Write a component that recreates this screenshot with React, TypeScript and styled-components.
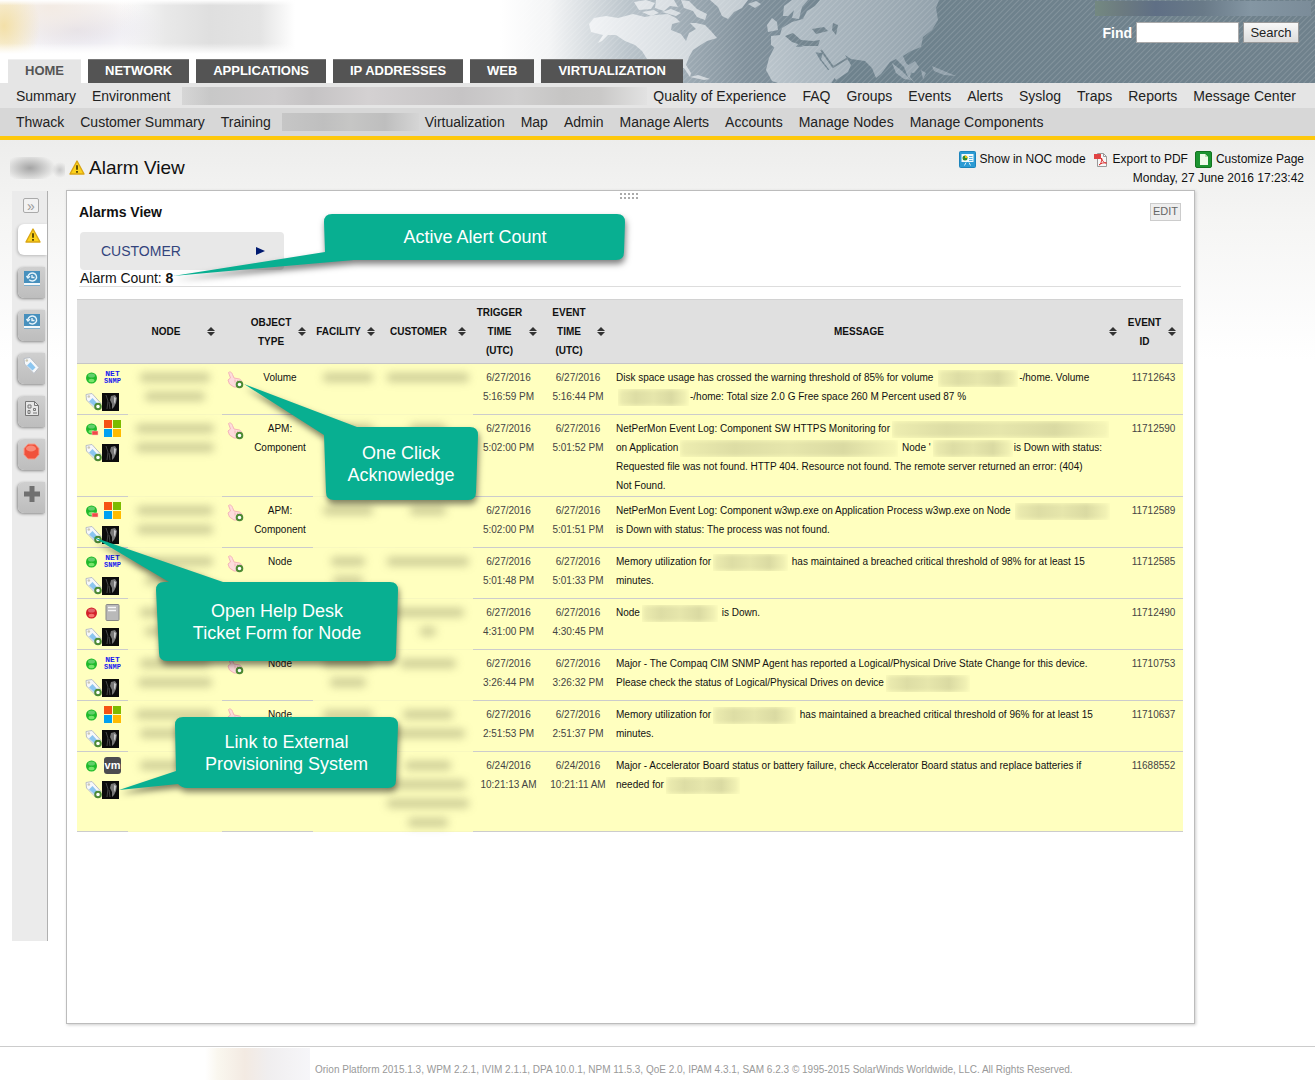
import React from "react";
import styled, { createGlobalStyle } from "styled-components";

const Global = createGlobalStyle`
  * { box-sizing: border-box; }
  body { margin: 0; background: #fff; color: #111; font-family: "Liberation Sans", Arial, sans-serif; font-size: 14px; }
  a { color: inherit; text-decoration: none; }
  svg { display: block; flex: none; }
`;

/* ---------- header ---------- */
const Header = styled.header`
  position: relative;
  display: flex;
  justify-content: space-between;
  height: 83px;
  overflow: hidden;
`;
const Backdrop = styled.div`
  position: absolute;
  top: 0;
  right: 0;
  z-index: -1;
`;
const Brand = styled.div`
  display: flex;
  flex-direction: column;
  justify-content: space-between;
  padding-left: 8px;
`;
const LogoBlur = styled.div`
  width: 300px;
  height: 54px;
  margin-left: -8px;
  background:
    linear-gradient(#fff, transparent 10%, transparent 80%, #fff),
    radial-gradient(ellipse 36px 50px at 4px 26px, #f3e0a8, transparent),
    radial-gradient(ellipse 90px 40px at 50px 8px, #f3ebe4, transparent),
    radial-gradient(ellipse 90px 34px at 76px 30px, #e2dfe9, transparent),
    linear-gradient(90deg, transparent 120px, #e9e9e9 165px, #dfdfdf 210px, #e4e4e4 260px, transparent 295px);
`;
const Tabs = styled.nav`
  display: flex;
  gap: 7px;
`;
const Tab = styled.a<{ $on?: boolean }>`
  padding: 0 17px;
  height: 24px;
  line-height: 22px;
  font-size: 13px;
  font-weight: bold;
  border-top: 1px solid ${(p) => (p.$on ? "#efefef" : "#777")};
  background: ${(p) => (p.$on ? "#e5e5e5" : "#545454")};
  color: ${(p) => (p.$on ? "#555" : "#fff")};
`;
const Tools = styled.form`
  display: flex;
  flex-direction: column;
  align-items: flex-end;
  gap: 6px;
  padding-top: 1px;
`;
const UserBlur = styled.div`
  width: 216px;
  height: 15px;
  margin-right: 4px;
  background: linear-gradient(90deg, #748981, #6c7b80 12%, #5f6f85 28%, #697a88 50%, #8496a3 72%, #7b8c99);
`;
const Find = styled.div`
  display: flex;
  align-items: center;
  gap: 4px;
  padding-right: 16px;
  label { color: #fff; font-weight: bold; }
  input { width: 103px; height: 21px; border: 1px solid #aaa; background: #fff; }
  button {
    width: 56px; height: 21px; padding: 0; border: 1px solid #999;
    background: linear-gradient(#f8f8f8, #dcdcdc); color: #222; font: 13px "Liberation Sans", Arial, sans-serif;
  }
`;
const SubNav = styled.nav<{ $dark?: boolean }>`
  display: flex;
  align-items: center;
  gap: 16px;
  height: ${(p) => (p.$dark ? 28 : 25)}px;
  padding: 0 19px 0 16px;
  white-space: nowrap;
  color: #222;
  background: ${(p) => (p.$dark ? "#d7d7d7" : "#e5e5e5")};
`;
const NavBlur = styled.span<{ $width?: number }>`
  flex: ${(p) => (p.$width ? `0 0 ${p.$width}px` : "1 1 0")};
  height: 18px;
  margin: 0 -10px 0 -5px;
  background: ${(p) =>
    p.$width
      ? "linear-gradient(90deg, #c6c6c6, #bfbfbf 30%, #c6c6c5 50%, #bebebe 75%, #d5d5d5)"
      : "linear-gradient(90deg, #d6d6d6, #c8c8c8 6%, #cfcdce 20%, #c5c3c4 28%, #d4d1d2 40%, #c6c4c5 60%, #d0cfcf 72%, #c6c5c4 82%, #cac9c8 90%, #e2e2e2)"};
`;

/* ---------- page ---------- */
const Content = styled.main`
  border-top: 4px solid #fec80c;
  background: linear-gradient(#ededec, #f5f5f4 80px, #fff 220px);
`;
const TitleRow = styled.div`
  display: flex;
  justify-content: space-between;
  height: 50px;
  padding: 0 11px 0 10px;
`;
const Title = styled.div`
  display: flex;
  align-items: center;
  gap: 4px;
  padding-top: 5px;
`;
const TitleBlur = styled.span`
  width: 55px;
  height: 22px;
  background:
    radial-gradient(ellipse 26px 14px at 20px 11px, #a4a4a4, transparent),
    radial-gradient(ellipse 8px 8px at 50px 13px, #c8c8c8, transparent);
`;
const Heading = styled.h1`
  margin: 0;
  font-size: 19px;
  line-height: 24px;
  font-weight: normal;
`;
const Actions = styled.div`
  padding-top: 10px;
  font-size: 12px;
  line-height: 19px;
  text-align: right;
`;
const ActionLinks = styled.div`
  display: flex;
  justify-content: flex-end;
  gap: 7px;
`;
const Action = styled.a`
  display: flex;
  align-items: center;
  gap: 4px;
`;
const Body = styled.div`
  display: flex;
  align-items: flex-start;
  gap: 18px;
  padding: 0 120px 22px 12px;
`;
const Rail = styled.aside`
  display: flex;
  flex-direction: column;
  gap: 12px;
  flex: 0 0 35px;
  min-height: 750px;
  margin-top: 1px;
  padding: 7px 0 0 6px;
  background: #ebebeb;
  border-right: 1px solid #b0b0b0;
`;
const Expand = styled.button`
  width: 16px;
  height: 15px;
  margin: 0 0 -1px 5px;
  padding: 0;
  border: 1px solid #aaa;
  border-radius: 2px;
  background: #f2f2f2;
  color: #999;
  font: 14px/10px "Liberation Sans", Arial, sans-serif;
`;
const RailTab = styled.button<{ $on?: boolean }>`
  display: flex;
  justify-content: center;
  width: ${(p) => (p.$on ? 29 : 27)}px;
  height: 31px;
  padding: 4px 0 0;
  border: 0;
  border-radius: 6px 0 0 6px;
  background: ${(p) => (p.$on ? "#fff" : "linear-gradient(#cfcfcf, #bdbdbd)")};
  box-shadow: -1px 1px 3px ${(p) => (p.$on ? "#bbb" : "#888")};
`;
const Panel = styled.section`
  position: relative;
  flex: 1;
  min-width: 0;
  min-height: 834px;
  padding: 2px 11px 0 10px;
  border: 1px solid #bcbcbc;
  background: #fff;
  box-shadow: 1px 1px 3px #ccc;
`;
const Grip = styled.div`
  width: 20px;
  height: 6px;
  margin: 0 auto;
  background: radial-gradient(circle at 1px 1px, #aaa 1px, transparent 1px) 0 0 / 4px 4px;
`;
const PanelHead = styled.div`
  display: flex;
  justify-content: space-between;
  align-items: center;
  height: 26px;
  margin-bottom: 7px;
  padding: 0 2px;
  h2 { margin: 0; font-size: 14px; }
  a { height: 18px; padding: 0 2px; border: 1px solid #ccc; background: #eee; color: #666; font-size: 11px; line-height: 15px; }
`;
const Filter = styled.button`
  display: flex;
  justify-content: space-between;
  align-items: center;
  width: 204px;
  height: 38px;
  margin-left: 3px;
  padding: 0 19px 0 21px;
  border: 0;
  border-radius: 4px;
  background: #e8e8e8;
  color: #33447c;
  font: 14px "Liberation Sans", Arial, sans-serif;
`;
const Count = styled.p`
  margin: 0 2px 12px;
  height: 17px;
  padding-left: 1px;
  line-height: 16px;
  border-bottom: 1px solid #ddd;
`;

/* ---------- table ---------- */
const Table = styled.table`
  width: 100%;
  table-layout: fixed;
  border-spacing: 0;
  font-size: 10px;
  line-height: 19px;
  color: #222;
`;
const Th = styled.th`
  height: 65px;
  padding: 0 6px 0 3px;
  background: #e0e0e0;
  border-top: 1px solid #d2d2d2;
  border-bottom: 1px solid #c6c6c6;
  color: #111;
`;
const ThInner = styled.div`
  display: flex;
  align-items: center;
  justify-content: center;
  gap: 5px;
  span { flex: 1; }
`;
const Row = styled.tr`
  height: 51px;
  background: #ffffbf;
`;
const Td = styled.td<{ $left?: boolean; $hideLine?: boolean; $pale?: boolean }>`
  padding: 4px 3px 1px;
  vertical-align: top;
  text-align: ${(p) => (p.$left ? "left" : "center")};
  color: ${(p) => (p.$pale ? "#444" : "#111")};
  border-bottom: 1px solid ${(p) => (p.$hideLine ? "#f8f8bf" : "#ccc")};
`;
const MessageTd = styled(Td)`
  padding-left: 4px;
  white-space: nowrap;
`;
const IconLine = styled.div<{ $tight?: boolean }>`
  display: flex;
  align-items: center;
  gap: ${(p) => (p.$tight ? 0 : 4)}px;
  height: ${(p) => (p.$tight ? 22 : 19)}px;
  padding: ${(p) => (p.$tight ? "7px 0 0 5px" : "0 0 0 3px")};
`;
const IconLink = styled.a`
  display: block;
`;
const AckLink = styled(IconLink)`
  padding: 3px 0 0 2px;
`;
const Smudge = styled.div<{ $width: number }>`
  width: ${(p) => p.$width}px;
  height: 9px;
  margin: 5px auto 10px;
  border-radius: 4px;
  background: rgba(90, 90, 60, 0.3);
  filter: blur(4px);
  &:last-child { margin-bottom: 3px; }
`;
const Redacted = styled.span<{ $width: number }>`
  display: inline-block;
  width: ${(p) => p.$width}px;
  height: 17px;
  margin: 0 1px 0 2px;
  vertical-align: middle;
  background: linear-gradient(90deg, rgba(110, 110, 70, 0.12), rgba(100, 100, 70, 0.22) 25%, rgba(100, 100, 70, 0.16) 50%, rgba(100, 100, 70, 0.24) 75%, rgba(110, 110, 70, 0.06));
  box-shadow: inset 0 0 5px #ffffbf;
`;

/* ---------- callouts ---------- */
const Callout = styled.div<{ $x: number; $y: number; $w: number; $h: number }>`
  position: absolute;
  left: ${(p) => p.$x}px;
  top: ${(p) => p.$y}px;
  width: ${(p) => p.$w}px;
  height: ${(p) => p.$h}px;
  display: flex;
  align-items: center;
  justify-content: center;
  text-align: center;
  white-space: pre-line;
  color: #fff;
  font-size: 18px;
  line-height: 22px;
  pointer-events: none;
  svg { position: absolute; left: 0; top: 0; overflow: visible; filter: drop-shadow(1px 4px 3px rgba(0, 0, 0, 0.5)); }
  span { position: relative; }
`;

/* ---------- footer ---------- */
const Footer = styled.footer`
  display: flex;
  align-items: flex-start;
  height: 34px;
  padding-left: 205px;
  border-top: 1px solid #ccc;
  color: #999;
  font-size: 10px;
  gap: 5px;
  p { margin: 0; padding-top: 17px; line-height: 12px; white-space: nowrap; }
`;
const FooterBlur = styled.div`
  width: 105px;
  height: 32px;
  margin-top: 1px;
  background: linear-gradient(90deg, #fff, #faf7ef 12%, #f3eae2 38%, #f0eeef 60%, #f6f6f9);
`;

/* ---------- drawings ---------- */
const WorldMap = () => (
  <svg width="815" height="83" viewBox="500 0 815 83">
    <defs>
      <linearGradient id="sea" x1="0" x2="1">
        <stop offset="0" stopColor="#fff" />
        <stop offset="0.06" stopColor="#f4f5f6" />
        <stop offset="0.16" stopColor="#b9c3ca" />
        <stop offset="0.3" stopColor="#82929d" />
        <stop offset="0.42" stopColor="#6e828d" />
        <stop offset="1" stopColor="#6f818c" />
      </linearGradient>
      <linearGradient id="land" gradientUnits="userSpaceOnUse" x1="590" x2="940" y1="0" y2="0">
        <stop offset="0" stopColor="#f1f3f5" />
        <stop offset="0.35" stopColor="#cdd4d9" />
        <stop offset="0.6" stopColor="#afbbc3" />
        <stop offset="1" stopColor="#93a2ac" />
      </linearGradient>
      <pattern id="stripes" width="4" height="4" patternUnits="userSpaceOnUse" patternTransform="rotate(45)">
        <rect width="1" height="4" fill="#fff" opacity="0.14" />
      </pattern>
    </defs>
    <rect x="500" width="815" height="83" fill="url(#sea)" />
    <g fill="url(#land)">
      <path d="M589 24l5-6 12-2 12 2 15-4 12 3 10-2 13-1 8 4 4 4-8 2-1 6 10 4 5 7 3-8 7-4-6-6 6 0 9 2 6 6 6 7-10 3-8 5-6 4-4 7-3 8 5 8-1 4-6-9-10 0-13 2-4-5-10-6-5-8-7-6-10-4-9-6h-8l-6 6-4 2 5-8-12-3z" />
      <path d="M634 2l12-2 9 3-4 6-12 1zM656 0h18l4 7-8-1-6 5-9-3zM642 12l12-2 5 3-8 3zM681 0l8 1 8 8 10 5-2 6-8-3-4-6-9-3zM662 12l9-3 10 4-5 3z" />
      <path d="M710 0h38l-6 8-8 4-6 7-6-3-4-9zM748 4l8-3 5 3-6 4zM690 77l8-2 12 4-6 1z" />
      <path d="M767 25l5-7 5 4 1 8-5 1-5 1zM783 16l1-10 8-6h16l-6 7-3 12-7-1 2-8-6 6z" />
      <path d="M771 45l0-9 9-1 2-7 10-6 11-3 4-8 8-5 5-6h119l-3 8 2 12-6 10-9 7-2 10-10 4-8 5 3 7 6 5-2 9 5 6-7-6-4-10-8-8-6 3-9 12-5 4-4-10-7-7-14-2-6-4 6 10-3 7-12 8-8-12-7-9 2-6-12-1-6-4-6-5-4 5-7-2-7 6z" />
      <path d="M775 46l14-4 6 5 17-1 8 14 8 10 10-2-2 8-6 9h-46l-12-4-6-11 3-12z" />
      <path d="M892 63l10 8 9 9-7-1-8-6zM907 66l8-5 4 6-5 6-7-1zM921 70l5 3-3 6zM932 66l24 10-12-1-10-4z" />
    </g>
    <g fill="#73858f">
      <path d="M812 29l12-2 4 4-12 3zM833 23l5 2-2 10-4-5zM785 36l8-3 8 7 12 1 7-1-2 6-14 0-12-4z" />
    </g>
    <path d="M821 50l12 17 15-9" fill="none" stroke="#73858f" strokeWidth="2" />
    <rect x="500" width="815" height="83" fill="url(#stripes)" />
  </svg>
);
const Warning = () => (
  <svg width="16" height="16" viewBox="0 0 16 16">
    <path d="M8 1l7 13H1z" fill="#fcd21c" stroke="#d9a514" strokeWidth="1.4" strokeLinejoin="round" />
    <path d="M8 5.2v4.6M8 11v1.7" stroke="#463800" strokeWidth="1.7" />
  </svg>
);
const NocIcon = () => (
  <svg width="17" height="17" viewBox="0 0 17 17">
    <rect x="0.5" y="0.5" width="16" height="16" rx="1" fill="#2b9bd4" stroke="#1c84bc" />
    <rect x="2.5" y="3" width="12" height="8" fill="#f4fafc" />
    <circle cx="6" cy="7" r="2.5" fill="#2f8a2f" />
    <path d="M6 7V4.500a2.500 2.500 0 0 1 2.500 2.500z" fill="#f1c40f" />
    <path d="M10 5.500h3.500M10 7.500h3.500M10 9.500h3.500" stroke="#5ab2df" />
    <path d="M5.500 14.500l1.500-3M11.500 14.500l-1.500-3" stroke="#d8eef8" />
  </svg>
);
const PdfIcon = () => (
  <svg width="16" height="16" viewBox="0 0 16 16">
    <path d="M4.500 1.500h6l3 3v10h-9z" fill="#f7f7f7" stroke="#999" />
    <path d="M10.500 1.500v3h3" fill="none" stroke="#999" />
    <rect x="1" y="2" width="7" height="5" fill="#e04343" />
    <path d="M6 13c2-1 3-4 2.500-7 1 3 2 5 5 5-3-.5-5 0-7.500 2z" fill="none" stroke="#d33" />
  </svg>
);
const PageIcon = () => (
  <svg width="17" height="17" viewBox="0 0 17 17">
    <rect x="0.500" y="0.500" width="16" height="16" rx="1.500" fill="#1c9431" stroke="#12741f" />
    <path d="M5 3h5l3 3v8H5z" fill="#eefbe9" />
    <path d="M10 3v3h3" fill="#b9e2b2" />
  </svg>
);
const HistoryIcon = () => (
  <svg width="16" height="16" viewBox="0 0 16 16">
    <rect x="0" y="0" width="16" height="12" fill="#4790bd" />
    <rect x="0" y="12" width="16" height="2" fill="#f3f8fa" />
    <rect x="0" y="14" width="16" height="1" fill="#7faecb" />
    <path d="M4 5.500a4.300 4 0 1 1 1.200 3.300M2.500 5l1.500 2 2-1.700M8 4v2.500h2.500" fill="none" stroke="#e7f4fb" strokeWidth="1.400" />
  </svg>
);
const Tag = ({ plus }: { plus?: boolean }) => (
  <svg width="17" height="18" viewBox="0 0 17 18">
    <path d="M1 1.500l6-1 9 10-5 6L1.500 7z" fill="#f6f8fa" stroke="#b9bec6" />
    <path d="M7.500 5l5 5.500-3 3-5.500-5z" fill="#8cc6f0" />
    <circle cx="3.800" cy="3.500" r="1.300" fill="#ccc8b4" />
    {plus && <circle cx="13" cy="13.500" r="2.800" fill="#fff" stroke="#4c8a34" strokeWidth="2" />}
  </svg>
);
const ReportIcon = () => (
  <svg width="16" height="17" viewBox="0 0 16 17" fill="none" stroke="#777">
    <path d="M1.500 1.500h9l4 4v10h-13z" fill="#e6e6e6" />
    <path d="M10.500 1.500v4h4M4 5h3v3H4zM9.500 8.500h2v2h-2zM4 10.500h2v3H4zM9 13h4" />
  </svg>
);
const RecordIcon = () => (
  <svg width="17" height="17" viewBox="0 0 17 17">
    <path d="M5 1h7l4 4.500v6L12 16H5l-4-4.500v-6z" fill="#f0523c" stroke="#f7a08f" />
    <ellipse cx="8" cy="5.500" rx="5" ry="3" fill="#f98a78" />
  </svg>
);
const PlusIcon = () => (
  <svg width="16" height="16" viewBox="0 0 16 16">
    <path d="M5.500 0h5v5.500H16v5h-5.500V16h-5v-5.500H0v-5h5.500z" fill="#707070" />
  </svg>
);
const Ball = ({ state }: { state: string }) => (
  <svg width="17" height="16" viewBox="0 0 17 16">
    <circle cx="8.500" cy="8" r="5.500" fill={state === "down" ? "#d3202a" : "#1fba2c"} />
    <ellipse cx="8.500" cy="5.500" rx="3.500" ry="2" fill="#fff" opacity="0.3" />
    <ellipse cx="8.500" cy="10.500" rx="3" ry="1.800" fill={state === "down" ? "#ff8a80" : "#8ff07c"} opacity="0.8" />
    {state === "warn" && <rect x="9" y="10" width="6" height="4" fill="#f04848" stroke="#ffc8b8" strokeWidth="0.500" />}
  </svg>
);
const Vendor = ({ kind }: { kind: string }) => (
  <svg width="17" height="17" viewBox="0 0 17 17">
    {kind === "snmp" && (
      <g fill="#1a1af0" fontFamily="Liberation Mono, monospace" fontWeight="bold" textAnchor="middle">
        <text x="8.500" y="7" fontSize="8">NET</text>
        <text x="8.500" y="14" fontSize="7">SNMP</text>
      </g>
    )}
    {kind === "windows" && (
      <g>
        <rect width="8" height="8" fill="#f65314" />
        <rect x="9" width="8" height="8" fill="#7cbb00" />
        <rect y="9" width="8" height="8" fill="#00a1f1" />
        <rect x="9" y="9" width="8" height="8" fill="#ffbb00" />
      </g>
    )}
    {kind === "server" && (
      <g>
        <rect x="2" y="0.500" width="13" height="16" rx="1" fill="#b9b9b9" stroke="#888" />
        <path d="M4 3.500h8M4 6.500h8" stroke="#f5f5f5" strokeWidth="1.500" />
      </g>
    )}
    {kind === "vm" && (
      <g>
        <rect width="17" height="17" rx="3" fill="#4b4b4f" />
        <text x="8.500" y="12" fontSize="11" fill="#fff" textAnchor="middle" fontWeight="bold" fontFamily="Liberation Sans, sans-serif">vm</text>
      </g>
    )}
  </svg>
);
const Portrait = () => (
  <svg width="17" height="18" viewBox="0 0 17 18">
    <rect width="17" height="18" fill="#0c0c0c" />
    <path d="M9 3l4-1 2 3-1 5-2 4-2 2 0-5-2-4z" fill="#777" />
    <path d="M12 4l2 1-1 6-1-2z" fill="#c9c9c9" />
    <path d="M4 2l2 6-1 8M7 9l1 7" stroke="#444" fill="none" />
  </svg>
);
const Thumb = () => (
  <svg width="17" height="18" viewBox="0 0 17 18">
    <path d="M1.500 1.500c1.500-1.500 3.500 0 4 2l1.500 3.500 5.500 1c2 1 2.500 2.500 2.500 4l-3 4H7l-4.500-3-1.500-4 2.500-2z" fill="#fddcdc" stroke="#f5b4b8" />
    <path d="M8 8.500v3M10.500 9v2.500" stroke="#f5b4b8" />
    <circle cx="12.500" cy="13.500" r="2.800" fill="#fff" stroke="#4c8a34" strokeWidth="2" />
  </svg>
);
const Sorter = () => (
  <svg width="10" height="9" viewBox="0 0 10 9">
    <path d="M5 0l4 4H1zM5 9L1 5h8z" fill="#333" />
  </svg>
);
const Play = () => (
  <svg width="9" height="8" viewBox="0 0 9 8">
    <path d="M0 0l9 4-9 4z" fill="#001a70" />
  </svg>
);

/* ---------- data ---------- */
const tabs = ["HOME", "NETWORK", "APPLICATIONS", "IP ADDRESSES", "WEB", "VIRTUALIZATION"];
const mainLinks = ["Quality of Experience", "FAQ", "Groups", "Events", "Alerts", "Syslog", "Traps", "Reports", "Message Center"];
const adminLinks = ["Virtualization", "Map", "Admin", "Manage Alerts", "Accounts", "Manage Nodes", "Manage Components"];
const widths = [51, 94, 25, 66, 69, 91, 71, 68, 0, 59];
const heads: string[][] = [[], ["NODE"], [], ["OBJECT", "TYPE"], ["FACILITY"], ["CUSTOMER"], ["TRIGGER", "TIME", "(UTC)"], ["EVENT", "TIME", "(UTC)"], ["MESSAGE"], ["EVENT", "ID"]];

type Alarm = {
  id: string; state: string; vendor: string; type: string[]; ack: boolean;
  node: number[]; facility: number[]; customer: number[];
  trigger: string[]; event: string[];
  /* one array per line; a number is the width of a masked name */
  message: (string | number)[][];
};
const alarms: Alarm[] = [
  { id: "11712643", state: "up", vendor: "snmp", type: ["Volume"], ack: true, node: [70, 60], facility: [50], customer: [82], trigger: ["6/27/2016", "5:16:59 PM"], event: ["6/27/2016", "5:16:44 PM"],
    message: [["Disk space usage has crossed the warning threshold of 85% for volume ", 80, "-/home. Volume"], [71, "-/home: Total size 2.0 G Free space 260 M Percent used 87 %"]] },
  { id: "11712590", state: "warn", vendor: "windows", type: ["APM:", "Component"], ack: true, node: [78, 78], facility: [50], customer: [36], trigger: ["6/27/2016", "5:02:00 PM"], event: ["6/27/2016", "5:01:52 PM"],
    message: [["NetPerMon Event Log: Component SW HTTPS Monitoring for", 217], ["on Application", 218, " Node '", 80, "is Down with status:"], ["Requested file was not found. HTTP 404. Resource not found. The remote server returned an error: (404)"], ["Not Found."]] },
  { id: "11712589", state: "warn", vendor: "windows", type: ["APM:", "Component"], ack: true, node: [76, 76], facility: [50], customer: [36], trigger: ["6/27/2016", "5:02:00 PM"], event: ["6/27/2016", "5:01:51 PM"],
    message: [["NetPerMon Event Log: Component w3wp.exe on Application Process w3wp.exe on Node ", 95], ["is Down with status: The process was not found."]] },
  { id: "11712585", state: "up", vendor: "snmp", type: ["Node"], ack: true, node: [76, 60], facility: [34, 30], customer: [82], trigger: ["6/27/2016", "5:01:48 PM"], event: ["6/27/2016", "5:01:33 PM"],
    message: [["Memory utilization for", 75, " has maintained a breached critical threshold of 98% for at least 15"], ["minutes."]] },
  { id: "11712490", state: "down", vendor: "server", type: [], ack: false, node: [70, 60], facility: [], customer: [72, 16], trigger: ["6/27/2016", "4:31:00 PM"], event: ["6/27/2016", "4:30:45 PM"],
    message: [["Node", 76, " is Down."]] },
  { id: "11710753", state: "up", vendor: "snmp", type: ["Node"], ack: true, node: [70, 74], facility: [50, 36], customer: [56], trigger: ["6/27/2016", "3:26:44 PM"], event: ["6/27/2016", "3:26:32 PM"],
    message: [["Major - The Compaq CIM SNMP Agent has reported a Logical/Physical Drive State Change for this device."], ["Please check the status of Logical/Physical Drives on device", 84]] },
  { id: "11710637", state: "up", vendor: "windows", type: ["Node"], ack: true, node: [78, 70], facility: [50], customer: [50, 74], trigger: ["6/27/2016", "2:51:53 PM"], event: ["6/27/2016", "2:51:37 PM"],
    message: [["Memory utilization for", 83, " has maintained a breached critical threshold of 96% for at least 15"], ["minutes."]] },
  { id: "11688552", state: "up", vendor: "vm", type: [], ack: false, node: [70], facility: [], customer: [46, 76, 82, 40], trigger: ["6/24/2016", "10:21:13 AM"], event: ["6/24/2016", "10:21:11 AM"],
    message: [["Major - Accelerator Board status or battery failure, check Accelerator Board status and replace batteries if"], ["needed for", 74]] },
];
const callouts = [
  { x: 257, y: 23, w: 302, h: 46, text: "Active Alert Count", path: "M8 0H293Q301 0 301 8L300 38Q300 46 292 46H30L-151 62L1 38L0 8Q0 0 8 0Z" },
  { x: 257, y: 236, w: 154, h: 73, text: "One Click\nAcknowledge", path: "M33 0H146Q154 0 154 8L152 65Q152 73 144 73H10Q2 73 2 65L0 8L-80 -43Z" },
  { x: 89, y: 391, w: 242, h: 79, text: "Open Help Desk\nTicket Form for Node", path: "M67 0H234Q242 0 242 8L240 71Q240 79 232 79H11Q3 79 3 71L0 8Q0 0 8 0H13L-63 -45Z" },
  { x: 108, y: 526, w: 223, h: 71, text: "Link to External\nProvisioning System", path: "M8 0H215Q223 0 223 8L221 63Q221 71 213 71H12Q7 71 3 67L-56 73L1 54L0 8Q0 0 8 0Z" },
];

const Lines = ({ items }: { items: string[] }) => (
  <>{items.map((t, i) => <React.Fragment key={t}>{i > 0 && <br />}{t}</React.Fragment>)}</>
);

export default function App() {
  return (
    <>
      <Global />
      <Header>
        <Backdrop><WorldMap /></Backdrop>
        <Brand>
          <LogoBlur />
          <Tabs>{tabs.map((t, i) => <Tab key={t} href="#" $on={i === 0}>{t}</Tab>)}</Tabs>
        </Brand>
        <Tools>
          <UserBlur />
          <Find>
            <label htmlFor="find">Find</label>
            <input id="find" type="text" />
            <button type="button">Search</button>
          </Find>
        </Tools>
      </Header>
      <SubNav>
        <a href="#">Summary</a>
        <a href="#">Environment</a>
        <NavBlur />
        {mainLinks.map((t) => <a key={t} href="#">{t}</a>)}
      </SubNav>
      <SubNav $dark>
        <a href="#">Thwack</a>
        <a href="#">Customer Summary</a>
        <a href="#">Training</a>
        <NavBlur $width={137} />
        {adminLinks.map((t) => <a key={t} href="#">{t}</a>)}
      </SubNav>
      <Content>
        <TitleRow>
          <Title><TitleBlur /><Warning /><Heading>Alarm View</Heading></Title>
          <Actions>
            <ActionLinks>
              <Action href="#"><NocIcon />Show in NOC mode</Action>
              <Action href="#"><PdfIcon />Export to PDF</Action>
              <Action href="#"><PageIcon />Customize Page</Action>
            </ActionLinks>
            Monday, 27 June 2016 17:23:42
          </Actions>
        </TitleRow>
        <Body>
          <Rail>
            <Expand aria-label="Expand menu">»</Expand>
            <RailTab $on aria-label="Alarms"><Warning /></RailTab>
            <RailTab aria-label="History"><HistoryIcon /></RailTab>
            <RailTab aria-label="Recent"><HistoryIcon /></RailTab>
            <RailTab aria-label="Tickets"><Tag /></RailTab>
            <RailTab aria-label="Reports"><ReportIcon /></RailTab>
            <RailTab aria-label="Critical"><RecordIcon /></RailTab>
            <RailTab aria-label="Add"><PlusIcon /></RailTab>
          </Rail>
          <Panel>
            <Grip />
            <PanelHead><h2>Alarms View</h2><a href="#">EDIT</a></PanelHead>
            <Filter>CUSTOMER<Play /></Filter>
            <Count>Alarm Count: <b>8</b></Count>
            <Table>
              <colgroup>{widths.map((w, i) => <col key={i} style={w ? { width: w } : undefined} />)}</colgroup>
              <thead>
                <tr>
                  {heads.map((h, i) => (
                    <Th key={i} scope="col">
                      {h.length > 0 && <ThInner><span><Lines items={h} /></span><Sorter /></ThInner>}
                    </Th>
                  ))}
                </tr>
              </thead>
              <tbody>
                {alarms.map((a) => (
                  <Row key={a.id}>
                    <Td>
                      <IconLine><Ball state={a.state} /><Vendor kind={a.vendor} /></IconLine>
                      <IconLine $tight>
                        <IconLink href="#" aria-label="Open ticket"><Tag plus /></IconLink>
                        <IconLink href="#" aria-label="Provisioning"><Portrait /></IconLink>
                      </IconLine>
                    </Td>
                    <Td $hideLine>{a.node.map((w, i) => <Smudge key={i} $width={w} />)}</Td>
                    <Td>{a.ack && <AckLink href="#" aria-label="Acknowledge"><Thumb /></AckLink>}</Td>
                    <Td><Lines items={a.type} /></Td>
                    <Td $hideLine>{a.facility.map((w, i) => <Smudge key={i} $width={w} />)}</Td>
                    <Td $hideLine>{a.customer.map((w, i) => <Smudge key={i} $width={w} />)}</Td>
                    <Td $pale><Lines items={a.trigger} /></Td>
                    <Td $pale><Lines items={a.event} /></Td>
                    <MessageTd $left>
                      {a.message.map((line, n) => (
                        <React.Fragment key={n}>
                          {n > 0 && <br />}
                          {line.map((m, i) => (typeof m === "number" ? <Redacted key={i} $width={m} /> : <React.Fragment key={i}>{m}</React.Fragment>))}
                        </React.Fragment>
                      ))}
                    </MessageTd>
                    <Td $pale>{a.id}</Td>
                  </Row>
                ))}
              </tbody>
            </Table>
            {callouts.map((c) => (
              <Callout key={c.text} $x={c.x} $y={c.y} $w={c.w} $h={c.h}>
                <svg width={c.w} height={c.h}><path d={c.path} fill="#08af91" /></svg>
                <span>{c.text}</span>
              </Callout>
            ))}
          </Panel>
        </Body>
      </Content>
      <Footer>
        <FooterBlur />
        <p>Orion Platform 2015.1.3, WPM 2.2.1, IVIM 2.1.1, DPA 10.0.1, NPM 11.5.3, QoE 2.0, IPAM 4.3.1, SAM 6.2.3 © 1995-2015 SolarWinds Worldwide, LLC. All Rights Reserved.</p>
      </Footer>
    </>
  );
}
